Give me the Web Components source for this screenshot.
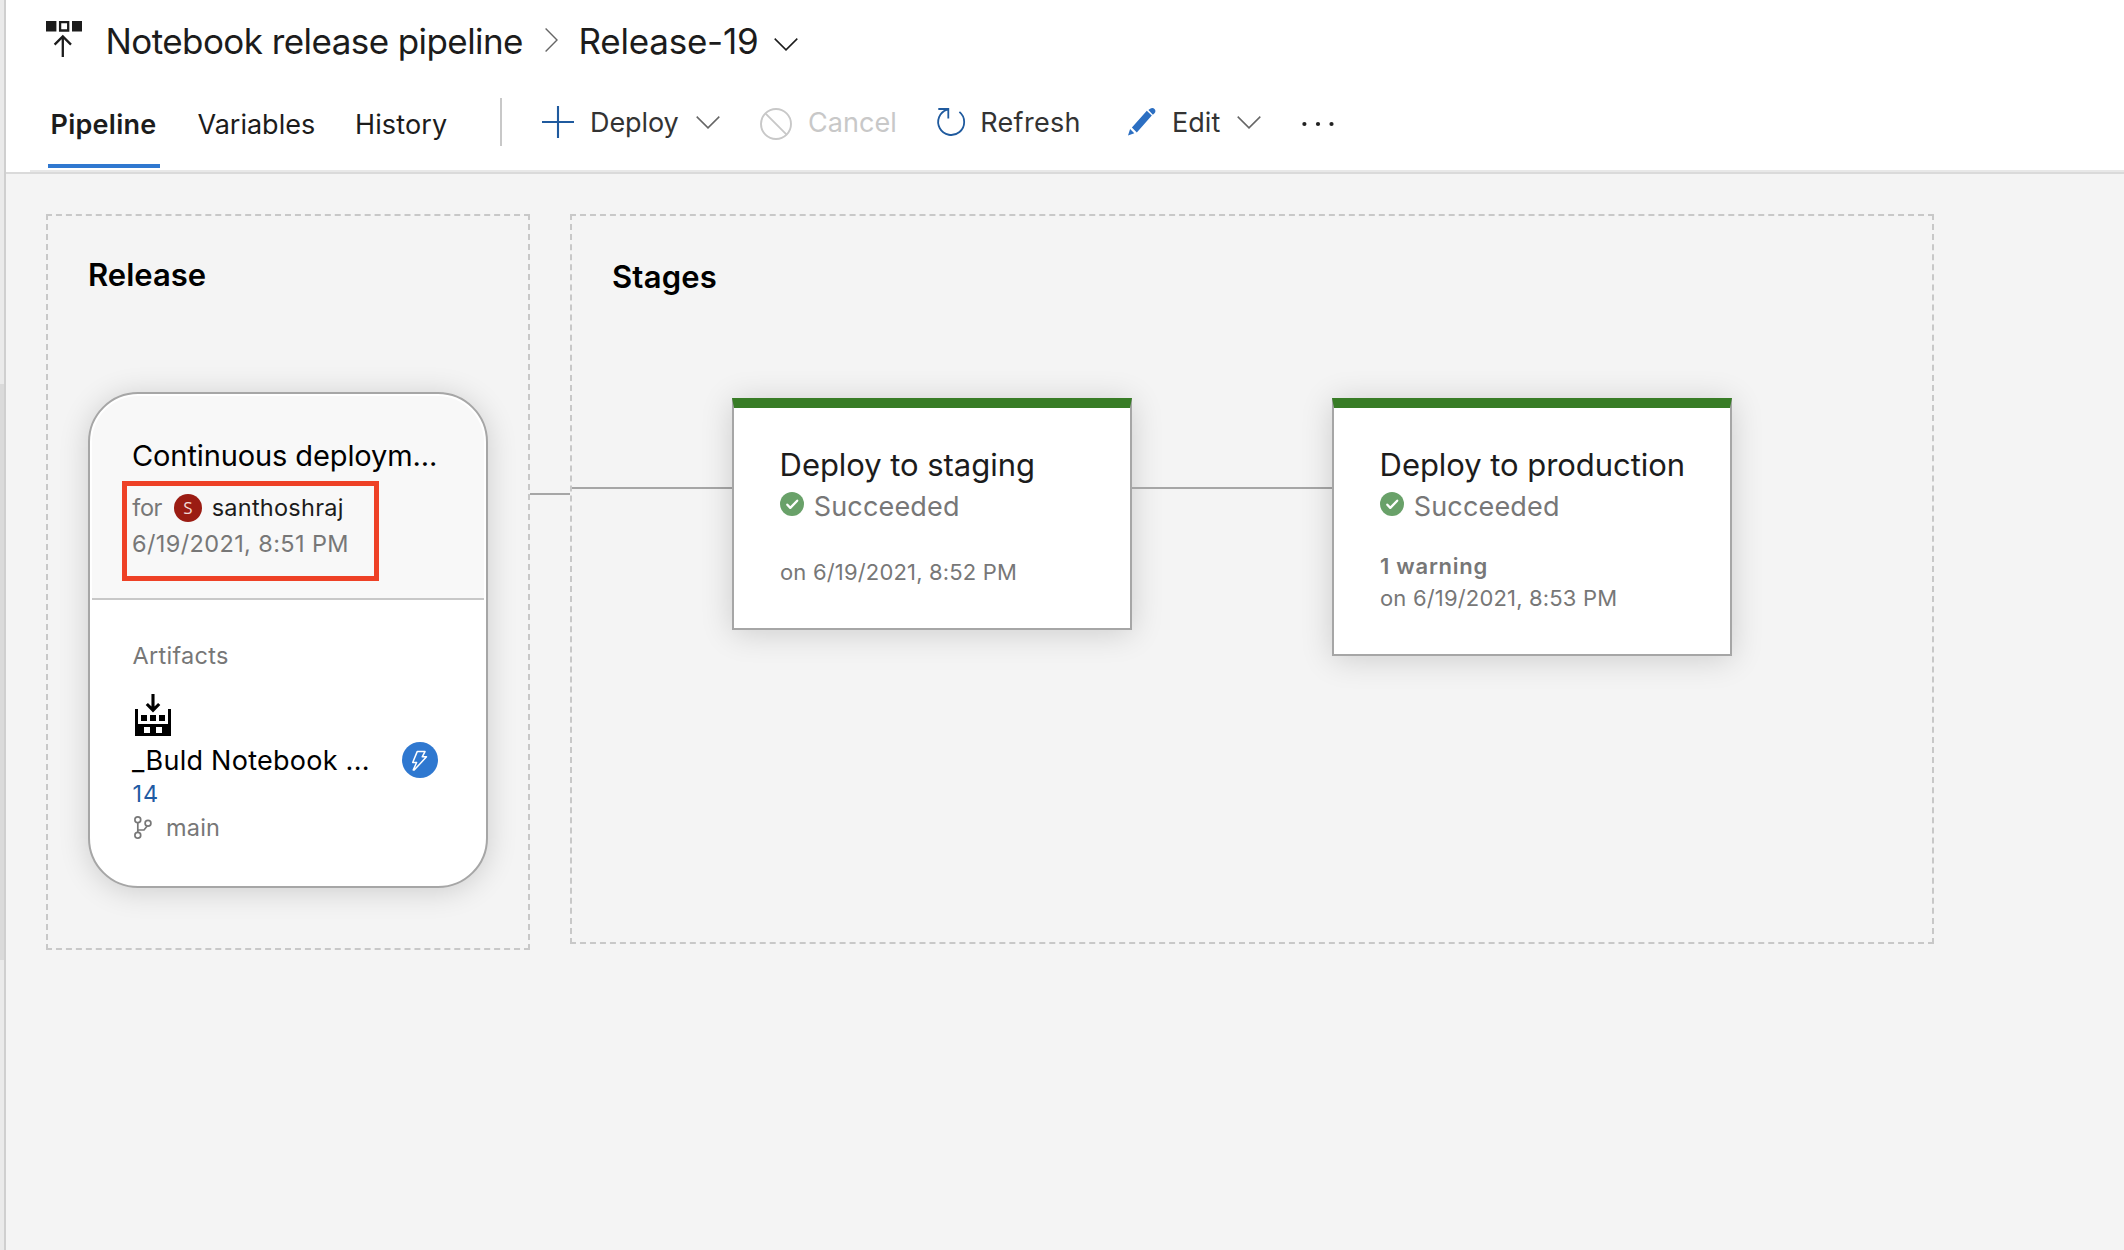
<!DOCTYPE html>
<html lang="en">
<head>
<meta charset="utf-8">
<title>Notebook release pipeline</title>
<style>
html,body{margin:0;height:100%}
body{font-family:Inter,"Liberation Sans",sans-serif;color:#1c1c1c;background:#f4f4f4;overflow:hidden}
</style>
</head>
<body>
<release-app></release-app>
<script>
const define = (name, html) => customElements.define(name, class extends HTMLElement {
  connectedCallback() {
    if (this.shadowRoot) return;
    const t = document.createElement('template');
    t.innerHTML = html;
    this.attachShadow({ mode: 'open' }).append(t.content.cloneNode(true));
  }
});

/* ---------- icons ---------- */
const icons = {
  release: [36, 36, '<path fill="#1c1c1c" d="M0 0h10.4v10.6H0zM26 0h10v10.6H26z"/><path fill="none" stroke="#1c1c1c" stroke-width="2.3" d="M14.1 1.2h8.1v8.3h-8.1zM16.8 36V15.5M8.6 23.6l8.2-8.2 8.2 8.2"/>'],
  right: [13, 24, '<path fill="none" stroke="#666" stroke-width="1.4" d="M.6.6 12 12 .6 23.4"/>'],
  down: [24, 13, '<path fill="none" stroke="currentColor" stroke-width="1.5" d="M.7.6 12 11.9 23.3.6"/>'],
  plus: [32, 32, '<path fill="none" stroke="#1f5a9e" stroke-width="2.1" d="M16 0v32M0 16h32"/>'],
  cancel: [32, 32, '<g fill="none" stroke="#c8c8c8" stroke-width="1.9"><circle cx="16" cy="16" r="15"/><path d="M5.4 5.4l21.2 21.2"/></g>'],
  refresh: [28, 28, '<path fill="none" stroke="#1f5a9e" stroke-width="1.8" d="M22.4 3.9A13 13 0 1 1 10.2 1.6M1.3 1H11.3V10.4"/>'],
  pencil: [28, 28, '<path fill="#2c6fc2" d="M3.9 19.4 18.8 2.8l5 4.8L8.8 24.4zM0 27.4l2.1-6.3 4.2 4.2zM20.4 2l1.7-1.3c1.6-1.2 3.3-1 4.4.2 1.2 1.1 1.3 2.9 0 4.3L24.9 6.8z"/>'],
  dots: [32, 6, '<g fill="#222"><circle cx="2.4" cy="3" r="2.1"/><circle cx="16" cy="3" r="2.1"/><circle cx="29.5" cy="3" r="2.1"/></g>'],
  build: [36, 42, '<path fill="#000" fill-rule="evenodd" d="M0 15h3v15h30V15h3v27H0zM9 33v6h6v-6zM21 33v6h6v-6zM6 21h6v6H6zM15 21h6v6h-6zM24 21h6v6h-6z"/><path fill="none" stroke="#000" stroke-width="3.1" d="M18 0v16M11.8 10l6.2 6.2L24.2 10"/>'],
  branch: [18, 24, '<g fill="none" stroke="#777" stroke-width="1.7"><circle cx="3.8" cy="3.8" r="2.9"/><circle cx="14" cy="7.3" r="2.9"/><circle cx="3.8" cy="19.3" r="2.9"/><path d="M3.8 6.7v9.7M3.8 14H10l3.2-4"/></g>'],
  bolt: [36, 36, '<circle cx="18" cy="18" r="18" fill="#2f78d0"/><path fill="none" stroke="#fff" stroke-width="1.5" stroke-linejoin="round" d="M15.2 9.6H23l-2.8 5.2h4.3L12.2 28.1h-1L14.6 20.5h-3.9z"/>'],
  check: [24, 24, '<circle cx="12" cy="12" r="12" fill="#69a169"/><path fill="none" stroke="#fff" stroke-width="2.3" stroke-linecap="round" stroke-linejoin="round" d="M7.3 12.7l3 3.2 6.9-7.2"/>']
};
customElements.define('ui-icon', class extends HTMLElement {
  connectedCallback() {
    if (this.shadowRoot) return;
    const [w, h, body] = icons[this.getAttribute('name')];
    this.attachShadow({ mode: 'open' }).innerHTML =
      `<style>:host{display:block;flex:none;width:${w}px;height:${h}px}svg{display:block;overflow:visible}</style>
       <svg width="${w}" height="${h}" viewBox="0 0 ${w} ${h}">${body}</svg>`;
  }
});

/* ---------- header ---------- */
define('crumb-bar', `
<style>
:host{display:flex;height:90px;box-sizing:border-box;padding:20px 0 0 40px;font-size:35px;line-height:42px;white-space:nowrap}
.a{width:417.5px;margin-left:23.5px;letter-spacing:-.57px}
.b{width:180px;margin-left:20.3px;letter-spacing:-.223px}
.root{margin-top:1px}
.next{margin:8px 0 0 22.2px}
.more{margin:17.5px 0 0 16px}
</style>
<ui-icon class="root" name="release"></ui-icon>
<span class="a">Notebook release pipeline</span>
<ui-icon class="next" name="right"></ui-icon>
<span class="b">Release-19</span>
<ui-icon class="more" name="down"></ui-icon>`);

define('nav-tab', `
<style>
:host{display:block;box-sizing:border-box;height:78px;padding-top:18px;font-size:27px;line-height:33px;white-space:nowrap}
:host([selected]){font-weight:600;border-bottom:4px solid #2f78d0}
</style><slot></slot>`);

define('tool-button', `
<style>
:host{display:flex;height:33px;margin-top:16px;font-size:27px;line-height:33px;color:#333;white-space:nowrap}
:host([disabled]){color:#c8c8c8}
</style><slot></slot>`);

define('nav-bar', `
<style>
:host{display:flex;height:80px;padding-left:42px;box-sizing:border-box}
.t1{width:112px;padding-left:2.5px;letter-spacing:.26px;box-sizing:border-box}
.t2{margin-left:37.4px;width:118px}
.t3{margin-left:39.6px;width:93px;letter-spacing:.133px}
.sep{width:2px;height:48px;margin:8px 40px 0 52px;background:#c8c8c8}
.d{width:89px;margin-left:16px;letter-spacing:-.092px}
.c{width:89px;margin-left:16px;letter-spacing:.06px}
.r{width:100.5px;margin-left:15.3px;letter-spacing:.296px}
.e{width:48.5px;margin-left:16px;letter-spacing:.067px}
.chev{margin:9.5px 0 0 17px;color:#666}
.dots{margin:15px 0 0}
</style>
<nav-tab class="t1" selected>Pipeline</nav-tab>
<nav-tab class="t2">Variables</nav-tab>
<nav-tab class="t3">History</nav-tab>
<div class="sep"></div>
<tool-button><ui-icon name="plus"></ui-icon><span class="d">Deploy</span><ui-icon class="chev" name="down"></ui-icon></tool-button>
<tool-button disabled style="margin-left:40px"><ui-icon name="cancel" style="margin-top:2px"></ui-icon><span class="c">Cancel</span></tool-button>
<tool-button style="margin-left:40px"><ui-icon name="refresh" style="margin-top:2px"></ui-icon><span class="r">Refresh</span></tool-button>
<tool-button style="margin-left:47.2px"><ui-icon name="pencil" style="margin-top:2px"></ui-icon><span class="e">Edit</span><ui-icon class="chev" name="down"></ui-icon></tool-button>
<tool-button style="margin-left:41px"><ui-icon class="dots" name="dots"></ui-icon></tool-button>`);

define('page-header', `
<style>
:host{display:block;background:#fff;border-bottom:2px solid #dadada}
.rule{height:2px;margin-left:24px;background:#e8e8e8}
</style>
<crumb-bar></crumb-bar><nav-bar></nav-bar><div class="rule"></div>`);

/* ---------- canvas ---------- */
define('pipeline-panel', `
<style>
:host{display:block;box-sizing:border-box;border:2px dashed #c8c8c8}
h2{margin:0;font-size:31px;line-height:37px;font-weight:600;color:#000;white-space:nowrap}
</style>
<h2><slot name="title"></slot></h2><slot></slot>`);

define('flow-line', `<style>:host{display:block;flex:none;height:2px;background:#a6a6a6}</style>`);

define('release-card', `
<style>
:host{display:block;box-sizing:border-box;position:relative;width:400px;height:496px;padding:2px;border:2px solid #a6a6a6;border-radius:50px;background:#fff;box-shadow:0 3px 30px rgba(0,0,0,.16);color:#777;font-size:23.5px;line-height:29px;white-space:nowrap}
.head{box-sizing:border-box;height:204px;padding:42px 0 0 40px;border-bottom:2px solid #c8c8c8;border-radius:46px 46px 0 0;background:#f8f8f8}
.title{font-size:29px;line-height:35px;letter-spacing:-.109px;color:#000}
.by{display:flex;margin-top:20px}
.for{width:41px;padding-left:.3px;box-sizing:border-box;letter-spacing:-.4px}
.avatar{width:28px;height:28px;margin:1px 9.7px 0 1px;border-radius:50%;background:#9b1c13;color:#f3d9d7;font:17px/28px "Open Sans",sans-serif;text-align:center}
.user{color:#1c1c1c;letter-spacing:.25px}
.date{margin-top:7px;letter-spacing:.38px}
.mark{position:absolute;left:31.5px;top:87px;width:257.3px;height:100px;box-sizing:border-box;border:5px solid #ee4126}
.body{padding:41px 0 0 40px}
.art{padding-left:.5px;letter-spacing:.28px}
.build{margin:24px 0 0 3px}
.row{display:flex;height:33px;margin-top:8px;font-size:27px;line-height:33px;letter-spacing:.262px;color:#000}
.row span{width:270px}
.row ui-icon{margin-top:-2px}
.num{margin-top:2px;padding-left:.5px;letter-spacing:1px;color:#1f5ba3}
.br{display:flex;margin-top:5px;padding-left:2px;letter-spacing:.176px}
.br span{margin-left:14px}
.br ui-icon{margin-top:3px}
</style>
<div class="head">
  <div class="title">Continuous deploym...</div>
  <div class="by"><span class="for">for</span><span class="avatar">S</span><span class="user">santhoshraj</span></div>
  <div class="date">6/19/2021, 8:51 PM</div>
</div>
<div class="body">
  <div class="art">Artifacts</div>
  <ui-icon class="build" name="build"></ui-icon>
  <div class="row"><span>_Buld Notebook ...</span><ui-icon name="bolt"></ui-icon></div>
  <div class="num">14</div>
  <div class="br"><ui-icon name="branch"></ui-icon><span>main</span></div>
</div>
<div class="mark"></div>`);

define('stage-card', `
<style>
:host{display:flex;flex-direction:column;flex:none;box-sizing:border-box;width:400px;padding:38px 0 43px 45px;border:2px solid #a6a6a6;border-top:10px solid #387c26;background:#fff;box-shadow:0 3px 30px rgba(0,0,0,.16);color:#777;font-size:22px;line-height:26px;letter-spacing:.17px;white-space:nowrap}
.title{padding-left:.6px;font-size:31px;line-height:37px;letter-spacing:-.05px;color:#1c1c1c}
.state{display:flex;margin:7px 0 30px 1px;font-size:27px;line-height:33px;letter-spacing:.17px}
.state ui-icon{margin:2px 9.7px 0 0}
.warn{display:block;margin:0 0 6px 1px;font-weight:600;letter-spacing:.747px}
.date{padding-left:1px}
:host(:not([warning])) .warn{display:none}
:host(:not([warning])) .date{margin-top:6px}
</style>
<div class="title"><slot name="name"></slot></div>
<div class="state"><ui-icon name="check"></ui-icon><slot name="state"></slot></div>
<div class="warn"><slot name="warning"></slot></div>
<div class="date"><slot name="date"></slot></div>`);

define('pipeline-canvas', `
<style>
:host{display:flex;align-items:flex-start;padding:40px 0 0 40px}
.rel{width:484px;height:736px;padding:40px 0 0 40px}
.rel release-card{margin-top:99px}
.stg{width:1364px;height:730px;padding-top:42px}
.stg [slot=title]{margin-left:40px;letter-spacing:.204px}
.row{display:flex;align-items:flex-start;margin-top:103px}
.row flow-line{margin-top:89px}
</style>
<pipeline-panel class="rel"><span slot="title">Release</span><release-card></release-card></pipeline-panel>
<flow-line style="width:40px;margin-top:279px"></flow-line>
<pipeline-panel class="stg"><span slot="title">Stages</span>
  <div class="row">
    <flow-line style="width:160px"></flow-line>
    <stage-card><span slot="name">Deploy to staging</span><span slot="state">Succeeded</span><span slot="date">on 6/19/2021, 8:52 PM</span></stage-card>
    <flow-line style="width:200px"></flow-line>
    <stage-card warning><span slot="name">Deploy to production</span><span slot="state">Succeeded</span><span slot="warning">1 warning</span><span slot="date">on 6/19/2021, 8:53 PM</span></stage-card>
  </div>
</pipeline-panel>`);

define('side-edge', `
<style>
:host{display:flex;flex-direction:column;flex:none;box-sizing:border-box;width:6px;padding-top:384px;border-right:2px solid #cfcfcf;background:#eaeaea}
div{height:576px;background:#dadada}
</style><div></div>`);

define('release-app', `
<style>
:host{display:flex;height:1250px;background:#f4f4f4}
main{flex:1;min-width:0}
</style>
<side-edge></side-edge>
<main><page-header></page-header><pipeline-canvas></pipeline-canvas></main>`);
</script>
</body>
</html>
